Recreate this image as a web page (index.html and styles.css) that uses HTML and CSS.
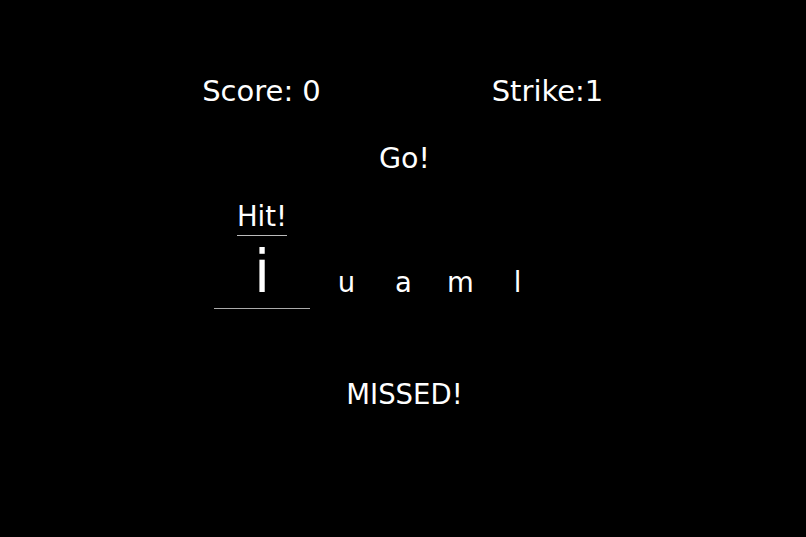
FILE: index.html
```html
<!DOCTYPE html>
<html>
<head>
<meta charset="utf-8">
<link rel="stylesheet" href="styles.css">
</head>
<body>
<div class="game">
  <div class="scores">
    <div class="score-cell">Score: 0</div>
    <div class="score-cell">Strike:1</div>
  </div>
  <div class="status">Go!</div>
  <div class="board">
    <div class="hit-row"><span class="hit">Hit!</span></div>
    <div class="letters">
      <div class="slot"><span class="current">i</span></div>
      <span class="letter">u</span>
      <span class="letter">a</span>
      <span class="letter">m</span>
      <span class="letter">l</span>
    </div>
  </div>
  <div class="missed">MISSED!</div>
</div>
</body>
</html>
```
FILE: styles.css
```css
html, body {
  margin: 0;
  padding: 0;
  background: #000;
}
body {
  width: 806px;
  height: 537px;
  overflow: hidden;
  color: #fff;
  font-family: "DejaVu Sans", "Open Sans", sans-serif;
}
.game {
  display: flex;
  flex-direction: column;
  padding-top: 73px;
  padding-left: 3px;
}
.scores {
  display: flex;
  justify-content: center;
  font-size: 29px;
  line-height: 36px;
}
.score-cell {
  width: 286px;
  text-align: center;
}
.status {
  margin-top: 32px;
  text-align: center;
  font-size: 28.5px;
  line-height: 36px;
}
.board {
  margin-top: 21px;
  padding-left: 211px;
  display: flex;
  flex-direction: column;
}
.hit-row {
  width: 96px;
  display: flex;
  justify-content: center;
}
.hit {
  font-size: 27.5px;
  line-height: 36px;
  padding-bottom: 1px;
  border-bottom: 1px solid #bbb;
}
.letters {
  margin-top: 6px;
  display: flex;
  align-items: baseline;
}
.slot {
  width: 96px;
  text-align: center;
  padding-bottom: 6px;
  border-bottom: 1px solid #aaa;
}
.current {
  font-size: 58px;
  line-height: 60px;
}
.letter {
  width: 57px;
  text-align: center;
  font-size: 27.5px;
  line-height: 32px;
}
.slot + .letter {
  margin-left: 8px;
}
.missed {
  margin-top: 67px;
  text-align: center;
  font-size: 27.5px;
  line-height: 36px;
}
```
